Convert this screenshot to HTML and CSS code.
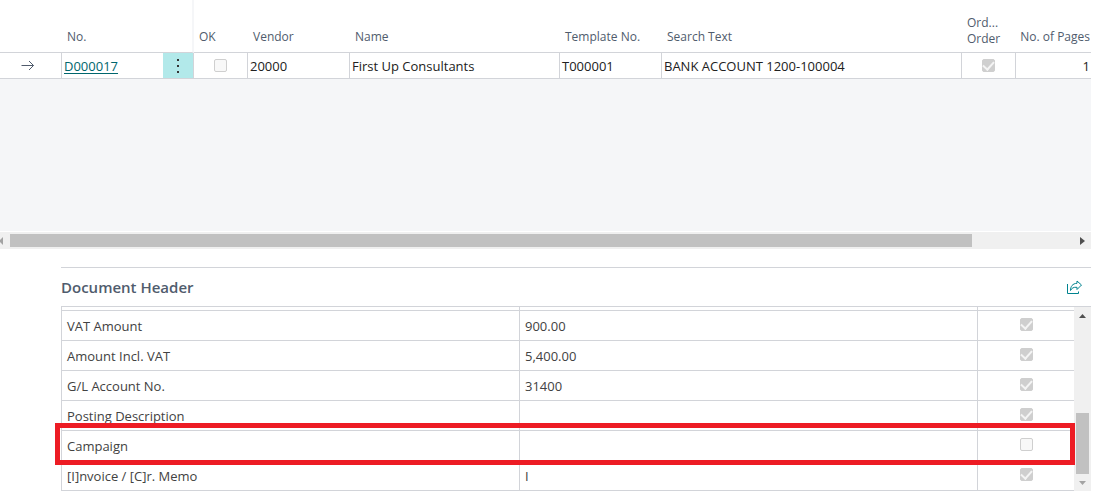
FILE: index.html
```html
<!DOCTYPE html>
<html lang="en">
<head>
<meta charset="utf-8">
<title>Document Header</title>
<link rel="stylesheet" href="styles.css">
</head>
<body>
<main class="page">
  <section class="documents" aria-label="Documents">
    <table class="list">
      <colgroup>
        <col class="col-select"><col class="col-no"><col class="col-menu"><col class="col-ok"><col class="col-vendor"><col class="col-name"><col class="col-template"><col class="col-search"><col class="col-order"><col class="col-pages">
      </colgroup>
      <thead>
        <tr>
          <th></th>
          <th class="frozen-edge" colspan="2">No.</th>
          <th>OK</th>
          <th>Vendor</th>
          <th>Name</th>
          <th>Template No.</th>
          <th>Search Text</th>
          <th class="two-line">Ord...<br>Order</th>
          <th class="number">No. of Pages</th>
        </tr>
      </thead>
      <tbody>
        <tr>
          <td class="center">
            <svg class="arrow" width="14" height="12" viewBox="0 0 14 12" aria-hidden="true"><path d="M0.500 5.500H12.500M8 1L12.500 5.500L8 10"/></svg>
          </td>
          <td class="no"><a href="#D000017">D000017</a></td>
          <td class="menu"><button type="button" aria-label="More options"><svg width="4" height="14" viewBox="0 0 4 14" aria-hidden="true"><path d="M1 0h2v2H1zM1 6h2v2H1zM1 12h2v2H1z"/></svg></button></td>
          <td class="center"><input type="checkbox" aria-label="OK" disabled></td>
          <td>20000</td>
          <td>First Up Consultants</td>
          <td>T000001</td>
          <td>BANK ACCOUNT 1200-100004</td>
          <td class="center"><input type="checkbox" aria-label="Order" checked disabled></td>
          <td class="number">1</td>
        </tr>
      </tbody>
    </table>
    <div class="empty"></div>
    <div class="hscroll">
      <button type="button" class="hscroll-left" aria-label="Scroll left"><svg width="3" height="8" viewBox="0 0 3 8"><path d="M3 0v8L0 5V3z"/></svg></button>
      <div class="hscroll-track"><div class="hscroll-thumb"></div></div>
      <button type="button" class="hscroll-right" aria-label="Scroll right"><svg width="5" height="8" viewBox="0 0 5 8"><path d="M0 0v8l5-4z"/></svg></button>
    </div>
  </section>

  <section class="header-part">
    <header class="part-title">
      <h2>Document Header</h2>
      <button type="button" aria-label="Share"><svg width="17" height="15" viewBox="0 0 17 15" aria-hidden="true"><path d="M1.500 4V13.500H12.500V11.500M11 1L15.500 5L11 9.500V7.300C7.500 7 5.800 8 4.500 10.500C4.500 6.500 6.500 3.500 11 3.300Z"/></svg></button>
    </header>
    <div class="part-body">
      <div class="fields-view">
        <table class="fields">
          <colgroup><col><col><col class="col-check"></colgroup>
          <tbody>
            <tr class="clipped"><td></td><td></td><td></td></tr>
            <tr><th scope="row">VAT Amount</th><td>900.00</td><td class="center"><input type="checkbox" aria-label="VAT Amount" checked disabled></td></tr>
            <tr><th scope="row">Amount Incl. VAT</th><td>5,400.00</td><td class="center"><input type="checkbox" aria-label="Amount Incl. VAT" checked disabled></td></tr>
            <tr><th scope="row">G/L Account No.</th><td>31400</td><td class="center"><input type="checkbox" aria-label="G/L Account No." checked disabled></td></tr>
            <tr><th scope="row">Posting Description</th><td></td><td class="center"><input type="checkbox" aria-label="Posting Description" checked disabled></td></tr>
            <tr class="marked"><th scope="row">Campaign</th><td></td><td class="center"><input type="checkbox" aria-label="Campaign" disabled></td></tr>
            <tr><th scope="row">[I]nvoice / [C]r. Memo</th><td>I</td><td class="center"><input type="checkbox" aria-label="[I]nvoice / [C]r. Memo" checked disabled></td></tr>
          </tbody>
        </table>
      </div>
      <div class="vscroll">
        <button type="button" aria-label="Scroll up"><svg width="7" height="4" viewBox="0 0 7 4"><path d="M0 4h7L3.500 0z"/></svg></button>
        <div class="vscroll-track"><div class="vscroll-thumb"></div></div>
        <button type="button" class="at-end" aria-label="Scroll down"><svg width="7" height="4" viewBox="0 0 7 4"><path d="M0 0h7L3.500 4z"/></svg></button>
      </div>
    </div>
  </section>
</main>
</body>
</html>
```
FILE: styles.css
```css
* { box-sizing: border-box; }

body {
  margin: 0;
  background: #fff;
  color: #212121;
  font: 13px/18px "Open Sans", "Noto Sans", sans-serif;
}

.page { padding-right: 10px; }

button {
  display: flex;
  align-items: center;
  justify-content: center;
  margin: 0;
  padding: 0;
  border: 0;
  background: none;
}

svg { display: block; }

table {
  width: 100%;
  table-layout: fixed;
  border-collapse: separate;
  border-spacing: 0;
}

th {
  font-weight: 400;
  text-align: left;
}

input[type="checkbox"] {
  appearance: none;
  display: block;
  width: 13px;
  height: 13px;
  margin: 0 auto;
  border: 1px solid #cfcfcf;
  border-radius: 2px;
  background: #f8f8f8;
}

input[type="checkbox"]:checked {
  display: flex;
  align-items: center;
  justify-content: center;
  background: #cfcfcf;
}

input[type="checkbox"]:checked::before {
  content: "";
  width: 5px;
  height: 9px;
  margin-bottom: 2px;
  border: solid #f4f4f4;
  border-width: 0 2px 2px 0;
  transform: rotate(42deg);
}

/* Document list */

.col-select { width: 62px; }
.col-no { width: 101px; }
.col-menu { width: 31px; }
.col-ok, .col-order { width: 54px; }
.col-vendor, .col-template { width: 102px; }
.col-name { width: 210px; }
.col-pages { width: 75px; }

.list th {
  height: 53px;
  padding: 0 0 7px 5px;
  border-bottom: 1px solid #d2d4d9;
  color: #505c6d;
  font-size: 12px;
  line-height: 16px;
  vertical-align: bottom;
  white-space: nowrap;
}

.list .frozen-edge { border-right: 2px solid #f5f6f8; }
.list .two-line { padding-bottom: 5px; }

.list td {
  height: 26px;
  padding: 0 2px;
  border-right: 1px solid #d2d4d9;
  border-bottom: 1px solid #d2d4d9;
  white-space: nowrap;
}

.list td:last-child { border-right: 0; }
.list .no { border-right: 0; }
.list .menu { padding: 0; background: #b2e9ea; }

.menu button {
  width: 100%;
  height: 25px;
  fill: #333;
}

.list .number {
  padding-right: 1px;
  padding-left: 0;
  text-align: right;
}

.no a {
  color: #00666d;
  text-underline-offset: 2px;
}

.arrow {
  margin: 0 auto;
  fill: none;
  stroke: #505c6d;
}

.list .center:first-child { padding-right: 8px; }

.empty {
  height: 152px;
  background: #f5f6f8;
}

/* Scroll bars */

.hscroll {
  display: flex;
  height: 17px;
  margin-top: 1px;
  background: #f0f0f0;
}

.hscroll-left {
  justify-content: flex-start;
  width: 10px;
  height: 17px;
  fill: #a3a3a3;
}

.hscroll-right { width: 17px; height: 17px; fill: #505050; }
.hscroll-track { flex: 1; padding: 2px 0; }
.hscroll-thumb { width: 90.400%; height: 13px; background: #c1c1c1; }

.vscroll {
  display: flex;
  flex-direction: column;
  width: 17px;
  background: #f0f0f0;
  fill: #505050;
}

.vscroll button { width: 17px; height: 17px; }
.vscroll .at-end { fill: #a3a3a3; }

.vscroll-track {
  display: flex;
  flex: 1;
  flex-direction: column;
  justify-content: flex-end;
  padding: 0 2px;
}

.vscroll-thumb { height: 61px; background: #c1c1c1; }

/* Document Header part */

.header-part {
  margin: 18px 0 0 61px;
  border-top: 1px solid #d2d4d9;
}

.part-title {
  display: flex;
  align-items: center;
  justify-content: space-between;
  height: 38px;
  padding-right: 8px;
}

.part-title h2 {
  margin: 0;
  color: #505c6d;
  font-size: 15px;
  font-weight: 600;
  line-height: 20px;
}

.part-title svg {
  fill: none;
  stroke: #00838f;
}

.part-body {
  display: flex;
  border-top: 1px solid #d2d4d9;
}

.fields-view {
  flex: 1;
  min-width: 0;
}

.fields {
  border-left: 1px solid #d2d4d9;
  color: #424242;
}

.col-check { width: 96px; }

.fields th,
.fields td {
  height: 30px;
  padding: 0 5px;
  border-right: 1px solid #d2d4d9;
  border-bottom: 1px solid #d2d4d9;
}

.fields td:last-child { border-right: 0; padding-bottom: 3px; }
.fields .clipped td { height: 4px; padding: 0; }

.marked { position: relative; }

.marked th::after {
  content: "";
  position: absolute;
  inset: -8px -1px -4px -7px;
  border: 5px solid #ed1c24;
}
```
